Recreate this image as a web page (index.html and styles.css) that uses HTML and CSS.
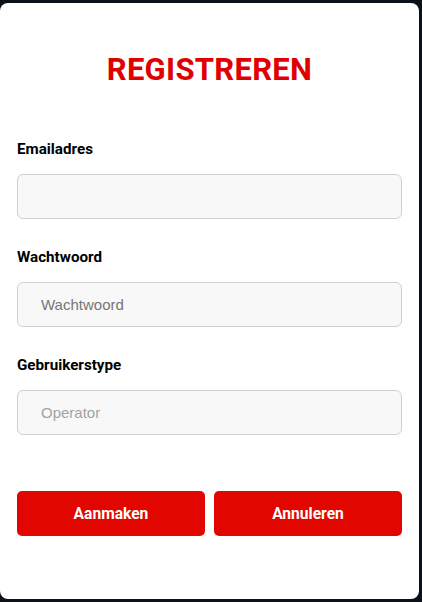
FILE: index.html
```html
<!DOCTYPE html>
<html lang="nl">
<head>
<meta charset="utf-8">
<title>Registreren</title>
<link rel="stylesheet" href="styles.css">
</head>
<body>
<div class="card">
  <h1 class="title">REGISTREREN</h1>
  <form class="form">
    <div class="field">
      <label class="label">Emailadres</label>
      <input class="input" type="email">
    </div>
    <div class="field">
      <label class="label">Wachtwoord</label>
      <input class="input" type="password" placeholder="Wachtwoord">
    </div>
    <div class="field">
      <label class="label">Gebruikerstype</label>
      <input class="input input-muted" type="text" placeholder="Operator">
    </div>
    <div class="actions">
      <button type="button" class="btn">Aanmaken</button>
      <button type="button" class="btn">Annuleren</button>
    </div>
  </form>
</div>
</body>
</html>
```
FILE: styles.css
```css
html, body {
  margin: 0;
  padding: 0;
  background: #0c1019;
  height: 100%;
}
body {
  padding-top: 3px;
  box-sizing: border-box;
}
.card {
  width: 419px;
  height: 596px;
  background: #ffffff;
  border-radius: 8px;
  box-sizing: border-box;
  padding: 49px 17px 0 17px;
  font-family: Roboto, "Liberation Sans", sans-serif;
}
.title {
  margin: 0;
  text-align: center;
  color: #e10000;
  font-weight: 700;
  font-size: 31px;
  line-height: 36px;
  letter-spacing: 0.3px;
}
.form {
  margin-top: 52px;
  display: flex;
  flex-direction: column;
  gap: 29px;
}
.field {
  display: flex;
  flex-direction: column;
}
.label {
  font-weight: 700;
  font-size: 15.2px;
  line-height: 18px;
  color: #000;
  margin-bottom: 16px;
}
.input {
  height: 45px;
  box-sizing: border-box;
  border: 1px solid #d0d0d0;
  border-radius: 6px;
  background: #f8f8f8;
  padding: 0 23px;
  font-family: "Liberation Sans", Arial, sans-serif;
  font-size: 15px;
  color: #333;
  outline: none;
}
.input::placeholder {
  color: #767676;
}
.input-muted::placeholder {
  color: #a3a3a3;
}
.actions {
  margin-top: 27px;
  display: flex;
  gap: 9px;
}
.btn {
  flex: 1;
  height: 45px;
  border: none;
  border-radius: 5px;
  background: #e10600;
  color: #fff;
  font-family: Roboto, "Liberation Sans", sans-serif;
  font-weight: 700;
  font-size: 15.6px;
}
```
